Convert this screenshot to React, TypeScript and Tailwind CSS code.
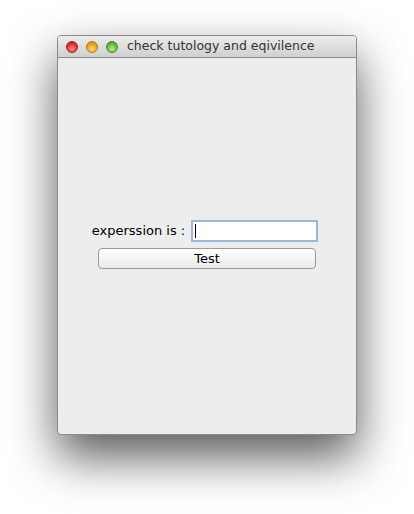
import React from "react";

function Light({ from, to, border }: { from: string; to: string; border: string }) {
  return (
    <span
      className="w-[12px] h-[12px] rounded-full border"
      style={{ background: `radial-gradient(circle at 50% 70%, ${to} 0%, ${from} 80%)`, borderColor: border }}
    />
  );
}

export default function App() {
  return (
    <div className="w-[414px] h-[514px] bg-white pt-[35px] pl-[57px] font-['DejaVu_Sans',sans-serif]">
      <div className="w-[300px] h-[400px] flex flex-col rounded-[4px] overflow-hidden bg-[#ededed] border border-[#8a8a8a] shadow-[0_22px_48px_rgba(0,0,0,0.65)]">
        {/* title bar */}
        <div className="h-[22px] flex items-center border-b border-[#8e8e8e] bg-gradient-to-b from-[#ececec] to-[#d0d0d0]">
          <div className="flex gap-[8px] pl-[8px]">
            <Light from="#c9191e" to="#ff8a85" border="#a61a1a" />
            <Light from="#d88d10" to="#ffd97a" border="#b07a18" />
            <Light from="#4d9e2a" to="#b8f08a" border="#4c8a2b" />
          </div>
          <span className="ml-[9px] text-[12.5px] text-[#333]">check tutology and eqivilence</span>
        </div>
        {/* content */}
        <div className="flex flex-col items-center pt-[162px]">
          <div className="flex items-center gap-[6px] pr-[4px]">
            <span className="text-[13px] text-black">experssion is :</span>
            <div className="w-[127px] h-[22px] bg-white border-2 border-[#9fb6d6] flex items-center pl-[2px]">
              <span className="w-[1px] h-[14px] bg-black" />
            </div>
          </div>
          <button className="mt-[6px] w-[218px] h-[21px] rounded-[4px] border border-[#9a9a9a] bg-gradient-to-b from-white to-[#eaeaea] text-[13px] text-black leading-none">
            Test
          </button>
        </div>
      </div>
    </div>
  );
}
